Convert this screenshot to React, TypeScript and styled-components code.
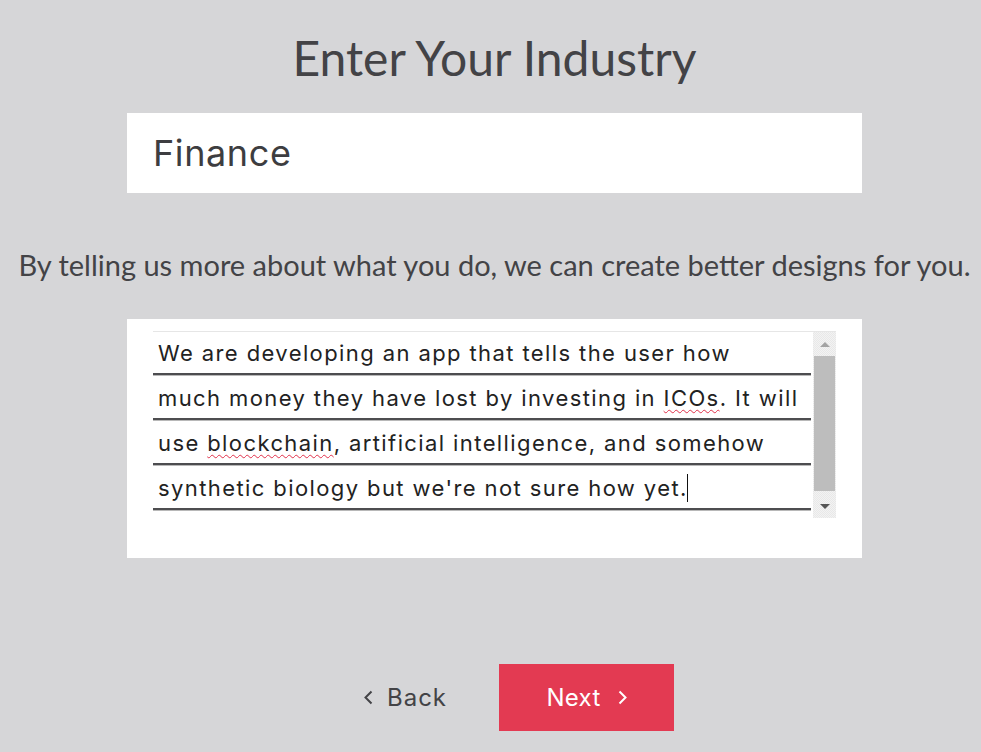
import React from "react";
import styled, { createGlobalStyle } from "styled-components";

const Global = createGlobalStyle`
  html, body { margin: 0; padding: 0; background: #d6d6d8; }
  body { font-family: "Lato", "Liberation Sans", sans-serif; }
`;

const Page = styled.div`
  display: flex;
  flex-direction: column;
  align-items: center;
  padding-left: 8px;
  width: 981px;
  box-sizing: border-box;
  height: 752px;
  overflow: hidden;
`;

const Title = styled.h1`
  margin: 25px 0 0;
  font-family: "Lato", sans-serif;
  font-weight: 400;
  font-size: 48px;
  line-height: 66px;
  color: #434346;
`;

const Card = styled.div<{ $h: number; $pt: number }>`
  width: 735px;
  height: ${(p) => p.$h}px;
  background: #ffffff;
  box-sizing: border-box;
  padding: ${(p) => p.$pt}px 26px 0;
`;

const InputText = styled.div`
  font-family: "Inter", sans-serif;
  font-size: 36px;
  letter-spacing: 0.6px;
  line-height: 80px;
  color: #3d3d40;
`;

const Subtitle = styled.p`
  margin: 52px 0 0;
  font-family: "Lato", sans-serif;
  font-size: 29px;
  line-height: 40px;
  color: #434346;
  white-space: nowrap;
`;

const Spacer = styled.div<{ $h: number }>`
  height: ${(p) => p.$h}px;
`;

const TextArea = styled.div`
  display: flex;
  height: 186px;
  border-top: 1px solid #e6e6e6;
`;

const Lines = styled.div`
  flex: 1;
  display: flex;
  flex-direction: column;
  margin-right: 2px;
`;

const Line = styled.div`
  height: 45px;
  box-sizing: border-box;
  padding-left: 5px;
  border-bottom: 2px solid #4d4d50;
  box-shadow: 0 1px 0 #b8b8b8;
  font-family: "Inter", sans-serif;
  font-size: 22px;
  letter-spacing: 1.4px;
  line-height: 46px;
  color: #222;
  white-space: nowrap;
  &:first-child { height: 43px; line-height: 43px; }
`;

const Misspelled = styled.span`
  text-decoration: underline wavy #e0304a;
  text-decoration-thickness: 1px;
  text-underline-offset: 3px;
`;

const Caret = styled.span`
  display: inline-block;
  width: 1px;
  height: 28px;
  margin-left: -1px;
  background: #111;
  vertical-align: -6px;
`;

const Scrollbar = styled.div`
  width: 23px;
  display: flex;
  flex-direction: column;
  align-items: center;
  background-color: #f3f3f3;
  background-image: linear-gradient(45deg, #e8e8e8 25%, transparent 25%, transparent 75%, #e8e8e8 75%),
    linear-gradient(45deg, #e8e8e8 25%, transparent 25%, transparent 75%, #e8e8e8 75%);
  background-size: 2px 2px;
  background-position: 0 0, 1px 1px;
`;

const Arrow = styled.div<{ $up?: boolean; $dark?: boolean }>`
  height: 24px;
  display: flex;
  align-items: center;
  justify-content: center;
  &::before {
    content: "";
    width: 0;
    height: 0;
    border-left: 5px solid transparent;
    border-right: 5px solid transparent;
    ${(p) =>
      p.$up
        ? `border-bottom: 5px solid ${p.$dark ? "#555" : "#a3a3a3"};`
        : `border-top: 5px solid ${p.$dark ? "#555" : "#a3a3a3"};`}
  }
`;

const Thumb = styled.div`
  width: 21px;
  height: 135px;
  background: #bdbdbd;
`;

const Track = styled.div`
  flex: 1;
`;

const Buttons = styled.div`
  display: flex;
  align-items: center;
  margin-top: 106px;
  margin-left: 49px;
`;

const BackButton = styled.button`
  display: flex;
  align-items: center;
  gap: 14px;
  background: none;
  border: none;
  padding: 0;
  margin-right: 52px;
  font-family: "Inter", sans-serif;
  font-size: 24px;
  letter-spacing: 1px;
  color: #434346;
  cursor: pointer;
`;

const NextButton = styled.button`
  display: flex;
  align-items: center;
  justify-content: center;
  gap: 17px;
  width: 175px;
  height: 67px;
  background: #e33a52;
  border: none;
  padding: 0;
  font-family: "Inter", sans-serif;
  font-size: 24px;
  letter-spacing: 0.3px;
  color: #ffffff;
  cursor: pointer;
`;

const Chevron = ({ dir, color }: { dir: "left" | "right"; color: string }) => (
  <svg width="9" height="15" viewBox="0 0 9 15" fill="none">
    <path
      d={dir === "left" ? "M7.5 1.5 L1.5 7.5 L7.5 13.5" : "M1.5 1.5 L7.5 7.5 L1.5 13.5"}
      stroke={color}
      strokeWidth="2"
    />
  </svg>
);

export default function App() {
  return (
    <>
      <Global />
      <Page>
        <Title>Enter Your Industry</Title>
        <Spacer $h={22} />
        <Card $h={80} $pt={0}>
          <InputText>Finance</InputText>
        </Card>
        <Subtitle>By telling us more about what you do, we can create better designs for you.</Subtitle>
        <Spacer $h={34} />
        <Card $h={239} $pt={12}>
          <TextArea>
            <Lines>
              <Line>We are developing an app that tells the user how</Line>
              <Line>
                much money they have lost by investing in <Misspelled>ICOs</Misspelled>. It will
              </Line>
              <Line>
                use <Misspelled>blockchain</Misspelled>, artificial intelligence, and somehow
              </Line>
              <Line>
                synthetic biology but we're not sure how yet.<Caret />
              </Line>
            </Lines>
            <Scrollbar>
              <Arrow $up />
              <Thumb />
              <Track />
              <Arrow $dark />
            </Scrollbar>
          </TextArea>
        </Card>
        <Buttons>
          <BackButton>
            <Chevron dir="left" color="#434346" />
            Back
          </BackButton>
          <NextButton>
            Next
            <Chevron dir="right" color="#ffffff" />
          </NextButton>
        </Buttons>
      </Page>
    </>
  );
}
